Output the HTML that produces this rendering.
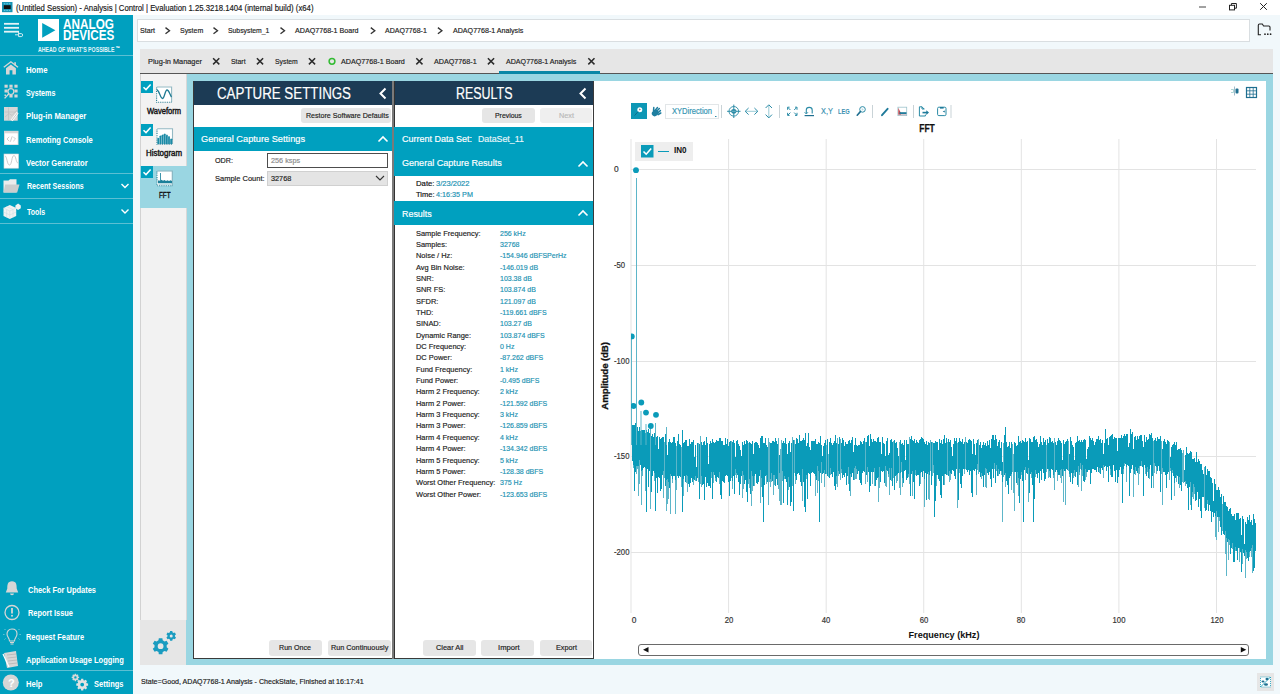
<!DOCTYPE html>
<html><head><meta charset="utf-8"><title>ACE</title>
<style>
html,body{margin:0;padding:0;width:1280px;height:694px;overflow:hidden;background:#fff}
body{position:relative;font-family:"Liberation Sans",sans-serif}
body>div{position:absolute;white-space:pre}
.r{-webkit-text-stroke:0.18px currentColor}
svg{overflow:visible}
</style></head><body>
<div style="left:0px;top:0px;width:1280px;height:15px;background:#ffffff;"></div>
<svg style="position:absolute;left:1.5px;top:2px" width="10.5" height="10.2" viewBox="0 0 10.5 10.2">
<rect x="0" y="0" width="10.5" height="10.2" fill="#1a93b3"/><rect x="1.8" y="3.2" width="6.9" height="3.8" fill="#111"/>
<g fill="#66d0e8"><rect x="1.8" y="1.3" width="1.6" height="1"/><rect x="4.3" y="1.3" width="1.6" height="1"/><rect x="6.8" y="1.3" width="1.6" height="1"/>
<rect x="1.8" y="7.9" width="1.6" height="1"/><rect x="4.3" y="7.9" width="1.6" height="1"/><rect x="6.8" y="7.9" width="1.6" height="1"/></g></svg>
<svg style="position:absolute;left:0;top:0" width="1280" height="15" viewBox="0 0 1280 15">
<line x1="1199" y1="7" x2="1206" y2="7" stroke="#444" stroke-width="1"/>
<rect x="1229.5" y="5.3" width="5" height="4.6" fill="none" stroke="#222" stroke-width="1"/>
<path d="M1231.4 5.2 V3.5 H1236.4 V8.2 H1234.6" fill="none" stroke="#222" stroke-width="1"/>
<path d="M1260.2 3.2 L1266.8 9.8 M1266.8 3.2 L1260.2 9.8" stroke="#222" stroke-width="1"/>
</svg>
<div style="left:0px;top:15px;width:133px;height:679px;background:#00a0bf;"></div>
<div style="left:133px;top:15px;width:1147px;height:679px;background:#f1f8fb;"></div>
<svg style="position:absolute;left:0px;top:16px" width="30" height="24" viewBox="0 16 30 24">
<g stroke="#e6f3f6" stroke-width="1.8"><line x1="4" y1="23.8" x2="19" y2="23.8"/><line x1="4" y1="27.8" x2="19" y2="27.8"/><line x1="4" y1="31.7" x2="19" y2="31.7"/></g>
<g stroke="#e6f3f6" stroke-width="0.9" fill="none"><path d="M15 34.8 H18.3 M18.6 31.8 V36.6 M18.6 33.6 H21.3 Q22.6 33.6 22.6 35.1 Q22.6 36.6 21.3 36.6 H18.6"/></g></svg>
<div style="left:38px;top:19px;width:21px;height:22px;background:#ffffff;"></div>
<svg style="position:absolute;left:38px;top:19px" width="21" height="22" viewBox="0 0 21 22"><path d="M4.2 4 L17.4 11.2 L4.2 18.8 Z" fill="#00a0bf"/></svg>
<div style="left:0px;top:55px;width:133px;height:1px;background:#5cbfd3;"></div>
<svg style="position:absolute;left:2px;top:60px" width="18" height="112" viewBox="0 0 18 112">
<path d="M1.8 7.2 L8.9 1.8 L16 7.2" stroke="#d6d6d6" stroke-width="1.4" fill="none"/>
<rect x="12.3" y="2.2" width="1.6" height="3.2" fill="#d6d6d6"/>
<path d="M4 8.2 L8.9 4.4 L13.9 8.2 V14.4 H10.4 V10.2 H7.6 V14.4 H4 Z" fill="#d6d6d6"/>
<g fill="#d6d6d6"><rect x="2.5" y="24.7" width="3.2" height="3"/><rect x="7.4" y="24.7" width="3.2" height="3"/><rect x="12.4" y="24.7" width="3.2" height="3"/>
<rect x="2.5" y="29.5" width="3.2" height="3"/><rect x="12.4" y="29.5" width="3.2" height="3"/>
<rect x="7.4" y="34.5" width="3.2" height="3"/><rect x="12.4" y="34.5" width="3.2" height="3"/><rect x="2.5" y="34.5" width="1.5" height="1.5"/></g>
<circle cx="8.9" cy="31.6" r="2.9" fill="#00a0bf" stroke="#d6d6d6" stroke-width="1.2"/>
<path d="M6.8 33.8 L2.6 38.4" stroke="#d6d6d6" stroke-width="1.4"/>
<rect x="2" y="47" width="13.7" height="13.7" fill="#d6d6d6"/>
<path d="M2.5 52 H15 M6.5 47.5 V60 M3 57 L7 53.5 L10 55.5 L15 50" stroke="#bdbdbd" stroke-width="0.6" fill="none"/>
<path d="M9.6 60.6 L15.6 52.6" stroke="#ffffff" stroke-width="2.4"/>
<path d="M9.6 60.6 L15.6 52.6" stroke="#c8c8c8" stroke-width="1"/>
<rect x="2" y="70.8" width="14.5" height="14.2" fill="#d6d6d6"/>
<rect x="2.8" y="73.3" width="12.9" height="11" fill="#ffffff"/>
<path d="M7.2 76.8 L5 79 L7.2 81.2 M11.3 76.8 L13.5 79 L11.3 81.2 M10.2 76.3 L8.3 81.8" stroke="#c0c0c0" stroke-width="0.8" fill="none"/>
<rect x="2" y="94" width="14.5" height="14.2" fill="#ffffff" stroke="#d6d6d6" stroke-width="0.6"/>
<path d="M3 96 C5 96, 5 105, 7.5 105 C10 105, 9.5 95.5, 12 95.5 C14 95.5, 14 103, 16 103" stroke="#c4c4c4" stroke-width="0.9" fill="none"/>
</svg>
<div style="left:0px;top:173px;width:133px;height:1px;background:#5cbfd3;"></div>
<svg style="position:absolute;left:2px;top:177px" width="18" height="44" viewBox="0 0 18 44">
<path d="M1.5 3.5 H6.5 L8 2.3 H14.5 V15.5 H1.5 Z" fill="#ececec"/>
<path d="M1.5 15.5 L3.2 7.6 H17.5 L15.2 15.5 Z" fill="#cdcdcd"/>
<path d="M1.5 31 L7.8 28 L14.2 31 V39 L7.8 42 L1.5 39 Z" fill="#f2f2f2"/>
<path d="M13.4 28.4 L16.1 26.5 L18.8 28.4 V31.2 L16.1 33 L13.4 31.2 Z" fill="#f2f2f2"/>
<g stroke="#c9dde2" stroke-width="0.5" fill="none"><path d="M1.5 31 L7.8 34 L14.2 31 M7.8 34 V42 M1.5 35 L7.8 38 L14.2 35 M4.6 29.5 L11 32.5 M4.6 32.5 V40.5 M11 32.5 V40.5"/></g>
</svg>
<svg style="position:absolute;left:119px;top:181px" width="12" height="36" viewBox="0 0 12 36">
<path d="M2.5 3 L6 6.5 L9.5 3 M2.5 28.5 L6 32 L9.5 28.5" stroke="#fff" stroke-width="1.4" fill="none"/></svg>
<div style="left:0px;top:198px;width:133px;height:1px;background:#5cbfd3;"></div>
<div style="left:0px;top:223px;width:133px;height:1px;background:#5cbfd3;"></div>
<svg style="position:absolute;left:2px;top:580px" width="20" height="112" viewBox="0 0 20 112">
<path d="M10 1.3 C5.5 1.3 5.3 5 5.3 8.5 L3.8 12.6 H16.2 L14.7 8.5 C14.7 5 14.5 1.3 10 1.3 Z M8 13.6 a2 1.6 0 0 0 4 0 Z" fill="#d6d6d6"/>
<circle cx="10" cy="32.5" r="7" fill="none" stroke="#d6d6d6" stroke-width="1.3"/>
<rect x="9.1" y="28" width="1.8" height="5.5" fill="#d6d6d6"/><circle cx="10" cy="35.8" r="1" fill="#d6d6d6"/>
<path d="M10 49 C6.5 49 5 51.5 5 54 C5 57 7.5 58 7.5 61 H12.5 C12.5 58 15 57 15 54 C15 51.5 13.5 49 10 49 Z" fill="none" stroke="#d6d6d6" stroke-width="1.1"/>
<path d="M8 62.5 H12 M8.5 64 H11.5" stroke="#d6d6d6" stroke-width="1"/><path d="M3.5 50 L2.5 49 M16.5 50 L17.5 49 M2.5 54.5 H1.2 M17.5 54.5 H18.8 M3.5 58.5 L2.5 59.5 M16.5 58.5 L17.5 59.5" stroke="#bfe3ea" stroke-width="0.6"/>
<path d="M2 73 L14 71 L16 86 L5 88 Z" fill="#d6d6d6"/>
<path d="M5 75 L14 74 M5.5 78 L14.5 77 M6 81 L15 80 M6.5 84 L15 83" stroke="#aaa" stroke-width="0.6"/>
<path d="M1 74 L7 87" stroke="#fff" stroke-width="1.2"/>
<circle cx="8.8" cy="102.5" r="8" fill="#d6d6d6"/>
</svg>
<div style="left:0px;top:670px;width:133px;height:1px;background:#5cbfd3;"></div>
<svg style="position:absolute;left:0;top:0" width="133" height="694" viewBox="0 0 133 694"><path d="M74.62 674.61 L74.73 673.66 L76.07 673.66 L76.18 674.61 L76.83 674.88 L77.57 674.28 L78.52 675.23 L77.92 675.97 L78.19 676.62 L79.14 676.73 L79.14 678.07 L78.19 678.18 L77.92 678.83 L78.52 679.57 L77.57 680.52 L76.83 679.92 L76.18 680.19 L76.07 681.14 L74.73 681.14 L74.62 680.19 L73.97 679.92 L73.23 680.52 L72.28 679.57 L72.88 678.83 L72.61 678.18 L71.66 678.07 L71.66 676.73 L72.61 676.62 L72.88 675.97 L72.28 675.23 L73.23 674.28 L73.97 674.88 Z M76.60 677.40 A1.2 1.2 0 1 0 74.20 677.40 A1.2 1.2 0 1 0 76.60 677.40 Z" fill="#d8d8d8" fill-rule="evenodd"/><path d="M80.97 680.17 L81.15 678.69 L83.25 678.69 L83.43 680.17 L84.46 680.60 L85.63 679.68 L87.12 681.17 L86.20 682.34 L86.63 683.37 L88.11 683.55 L88.11 685.65 L86.63 685.83 L86.20 686.86 L87.12 688.03 L85.63 689.52 L84.46 688.60 L83.43 689.03 L83.25 690.51 L81.15 690.51 L80.97 689.03 L79.94 688.60 L78.77 689.52 L77.28 688.03 L78.20 686.86 L77.77 685.83 L76.29 685.65 L76.29 683.55 L77.77 683.37 L78.20 682.34 L77.28 681.17 L78.77 679.68 L79.94 680.60 Z M84.10 684.60 A1.9 1.9 0 1 0 80.30 684.60 A1.9 1.9 0 1 0 84.10 684.60 Z" fill="#e2e2e2" fill-rule="evenodd"/></svg>
<div style="left:137px;top:18.5px;width:1113px;height:23px;background:#ffffff;box-sizing:border-box;border:1px solid #d9dee1"></div>
<svg style="position:absolute;left:0;top:0" width="600" height="45"><g stroke="#333" stroke-width="1.35" fill="none"><path d="M165.5 27.6 L169.5 30.7 L165.5 33.8" /><path d="M213.5 27.6 L217.5 30.7 L213.5 33.8" /><path d="M280.5 27.6 L284.5 30.7 L280.5 33.8" /><path d="M370.8 27.6 L374.8 30.7 L370.8 33.8" /><path d="M437.90000000000003 27.6 L441.90000000000003 30.7 L437.90000000000003 33.8" /></g></svg>
<svg style="position:absolute;left:0;top:0" width="1280" height="45" viewBox="0 0 1280 45">
<path d="M1261 34.8 H1258.3 V25.2 Q1258.3 24 1259.5 24 H1262.3 L1263.6 26 H1268.8 Q1270 26 1270 27.2 V30.5" fill="none" stroke="#222" stroke-width="1.1"/>
<g fill="#222"><circle cx="1265" cy="34.2" r="0.85"/><circle cx="1267.8" cy="34.2" r="0.85"/><circle cx="1270.6" cy="34.2" r="0.85"/></g></svg>
<div style="left:140px;top:49px;width:1133px;height:24px;background:#e6e6e6;"></div>
<div style="left:140px;top:72.5px;width:1133px;height:1px;background:#555555;"></div>
<svg style="position:absolute;left:0;top:0" width="620" height="75"><g stroke="#2b2b2b" stroke-width="1.5" fill="none"><path d="M213.1 58.2 L219.29999999999998 64.4 M219.29999999999998 58.2 L213.1 64.4"/><path d="M256.9 58.2 L263.1 64.4 M263.1 58.2 L256.9 64.4"/><path d="M308.9 58.2 L315.1 64.4 M315.1 58.2 L308.9 64.4"/><path d="M416.29999999999995 58.2 L422.5 64.4 M422.5 58.2 L416.29999999999995 64.4"/><path d="M487.9 58.2 L494.1 64.4 M494.1 58.2 L487.9 64.4"/><path d="M588.3 58.2 L594.5 64.4 M594.5 58.2 L588.3 64.4"/></g><circle cx="332" cy="61.3" r="2.9" fill="none" stroke="#33bb33" stroke-width="1.5"/></svg>
<div style="left:499px;top:71px;width:100.5px;height:2.5px;background:#0a87a6;"></div>
<div style="left:140px;top:73.5px;width:1133px;height:591.5px;background:#9ad6e2;"></div>
<div style="left:140px;top:74px;width:46.5px;height:546px;background:#f2f2f2;box-sizing:border-box;border-left:1px solid #d2d2d2;border-right:1px solid #d8d8d8"></div>
<div style="left:140px;top:620px;width:46px;height:44.5px;background:#e6e6e6;"></div>
<div style="left:140px;top:165.5px;width:53px;height:42px;background:#9ad6e2;"></div>
<svg style="position:absolute;left:141px;top:81px" width="12" height="12" viewBox="0 0 12 12"><rect width="12" height="12" fill="#00a0bf"/><path d="M2.5 6.2 L5 8.6 L9.6 3.4" stroke="#fff" stroke-width="1.5" fill="none"/></svg>
<svg style="position:absolute;left:141px;top:123.5px" width="12" height="12" viewBox="0 0 12 12"><rect width="12" height="12" fill="#00a0bf"/><path d="M2.5 6.2 L5 8.6 L9.6 3.4" stroke="#fff" stroke-width="1.5" fill="none"/></svg>
<svg style="position:absolute;left:141px;top:165.5px" width="12" height="12" viewBox="0 0 12 12"><rect width="12" height="12" fill="#00a0bf"/><path d="M2.5 6.2 L5 8.6 L9.6 3.4" stroke="#fff" stroke-width="1.5" fill="none"/></svg>
<svg style="position:absolute;left:155px;top:85px" width="20" height="110" viewBox="0 0 20 110">
<rect x="1.5" y="1.8" width="15.2" height="15.4" fill="#fff"/>
<path d="M1.8 2 H16.6 V17" stroke="#94b9c4" stroke-width="1.1" fill="none"/>
<path d="M1.6 2.5 V17.2 H16.6" stroke="#2b7d93" stroke-width="1.1" stroke-dasharray="0.9 0.9" fill="none"/>
<path d="M2 5 C4 5, 5.5 13.5, 7.5 13.5 C9.5 13.5, 10 5, 12 5 C14 5, 15 10, 16.5 12" stroke="#1f7a92" stroke-width="1.3" fill="none"/>
<rect x="2" y="43.6" width="15.6" height="15.5" fill="#fff"/>
<path d="M2.2 43.8 H17.5 V59" stroke="#94b9c4" stroke-width="1.1" fill="none"/>
<path d="M2 44.5 V59.2 H17.5" stroke="#2b7d93" stroke-width="1.1" stroke-dasharray="0.9 0.9" fill="none"/>
<g fill="#1b8aa6"><path d="M2.4 59 V53.5 Q3.3 51.9 4.2 53.5 V59 Z"/><path d="M4.5 59 V51.3 Q5.5 49.699999999999996 6.5 51.3 V59 Z"/><path d="M6.8 59 V50.2 Q7.699999999999999 48.6 8.6 50.2 V59 Z"/><path d="M8.9 59 V49.2 Q9.8 47.6 10.7 49.2 V59 Z"/><path d="M11 59 V50.2 Q11.9 48.6 12.8 50.2 V59 Z"/><path d="M13.1 59 V51.7 Q14.0 50.1 14.9 51.7 V59 Z"/><path d="M15.2 59 V54.2 Q16.2 52.6 17.2 54.2 V59 Z"/></g>
<rect x="2" y="85.8" width="15.5" height="14.9" fill="#fff"/>
<path d="M2.2 86 H17.3 V100.7" stroke="#7fb0bd" stroke-width="1.1" fill="none"/>
<path d="M2 86.6 V100.8 H17.3" stroke="#2b7d93" stroke-width="1.1" stroke-dasharray="0.9 0.9" fill="none"/>
<rect x="5.1" y="88" width="0.9" height="9" fill="#2a8aa3"/>
<path d="M3 96 L4 95 L5 96.2 L6.5 94.8 L8 95.8 L9.5 95 L11 96 L12.5 95.2 L14 96 L15.5 95.3 L17 96 V98.2 H3 Z" fill="#1b7f99"/>
<path d="M3.5 99.3 H16.5" stroke="#7fb7c6" stroke-width="0.6"/>
</svg>
<svg style="position:absolute;left:0;top:0" width="200" height="694" viewBox="0 0 200 694"><path d="M158.50 640.37 L158.81 638.20 L162.39 638.20 L162.70 640.37 L164.60 641.46 L166.64 640.65 L168.42 643.75 L166.70 645.10 L166.70 647.30 L168.42 648.65 L166.64 651.75 L164.60 650.94 L162.70 652.03 L162.39 654.20 L158.81 654.20 L158.50 652.03 L156.60 650.94 L154.56 651.75 L152.78 648.65 L154.50 647.30 L154.50 645.10 L152.78 643.75 L154.56 640.65 L156.60 641.46 Z M163.50 646.20 A2.9 2.9 0 1 0 157.70 646.20 A2.9 2.9 0 1 0 163.50 646.20 Z" fill="#1a9cc0" fill-rule="evenodd"/><path d="M169.91 632.32 L170.11 631.02 L172.29 631.02 L172.49 632.32 L173.65 633.00 L174.88 632.52 L175.97 634.40 L174.94 635.23 L174.94 636.57 L175.97 637.40 L174.88 639.28 L173.65 638.80 L172.49 639.48 L172.29 640.78 L170.11 640.78 L169.91 639.48 L168.75 638.80 L167.52 639.28 L166.43 637.40 L167.46 636.57 L167.46 635.23 L166.43 634.40 L167.52 632.52 L168.75 633.00 Z M172.70 635.90 A1.5 1.5 0 1 0 169.70 635.90 A1.5 1.5 0 1 0 172.70 635.90 Z" fill="#1a9cc0" fill-rule="evenodd"/></svg>
<div style="left:193px;top:81px;width:201px;height:578px;background:#ffffff;box-sizing:border-box;border:1px solid #3a3a3a"></div>
<div style="left:194px;top:81px;width:199px;height:23.5px;background:#1c3b55;"></div>
<svg style="position:absolute;left:376px;top:86px" width="14" height="16"><path d="M9.5 2.5 L4.5 7.5 L9.5 12.5" stroke="#fff" stroke-width="2" fill="none"/></svg>
<div style="left:301px;top:108px;width:90px;height:15px;background:#e6e6e6;border-radius:3px"></div>
<div style="left:194px;top:126.5px;width:199px;height:24px;background:#00a0bf;"></div>
<svg style="position:absolute;left:375px;top:132px" width="16" height="14"><path d="M3.5 9.5 L8 5 L12.5 9.5" stroke="#fff" stroke-width="1.6" fill="none"/></svg>
<div style="left:267px;top:153px;width:120.5px;height:15px;background:#ffffff;box-sizing:border-box;border:1.3px solid #4d4d4d"></div>
<div style="left:267px;top:171px;width:120.5px;height:14.7px;background:#e4e4e4;box-sizing:border-box;border:1px solid #d0d0d0"></div>
<svg style="position:absolute;left:374px;top:173px" width="12" height="10"><path d="M2 3 L6 7 L10 3" stroke="#333" stroke-width="1.1" fill="none"/></svg>
<div style="left:268.7px;top:640px;width:53.3px;height:15.5px;background:#e6e6e6;border-radius:3px"></div>
<div style="left:327.6px;top:640px;width:63px;height:15.5px;background:#e6e6e6;border-radius:3px"></div>
<div style="left:393px;top:81px;width:201px;height:578px;background:#ffffff;box-sizing:border-box;border:1px solid #3a3a3a"></div>
<div style="left:394px;top:81px;width:199px;height:23.5px;background:#1c3b55;"></div>
<div style="left:392px;top:81px;width:3px;height:578px;background:#7a7a7a;box-sizing:border-box;border-right:1px solid #333"></div>
<svg style="position:absolute;left:576px;top:86px" width="14" height="16"><path d="M9.5 2.5 L4.5 7.5 L9.5 12.5" stroke="#fff" stroke-width="2" fill="none"/></svg>
<div style="left:481.6px;top:108px;width:53.2px;height:15px;background:#e6e6e6;border-radius:3px"></div>
<div style="left:540px;top:108px;width:52px;height:15px;background:#efefef;border-radius:3px"></div>
<div style="left:394px;top:126.5px;width:199px;height:49px;background:#00a0bf;"></div>
<svg style="position:absolute;left:575px;top:157px" width="16" height="14"><path d="M3.5 9.5 L8 5 L12.5 9.5" stroke="#fff" stroke-width="1.6" fill="none"/></svg>
<div style="left:394px;top:201.2px;width:199px;height:23.5px;background:#00a0bf;"></div>
<svg style="position:absolute;left:575px;top:206px" width="16" height="14"><path d="M3.5 9.5 L8 5 L12.5 9.5" stroke="#fff" stroke-width="1.6" fill="none"/></svg>
<div style="left:423.2px;top:640px;width:52.5px;height:15.5px;background:#e6e6e6;border-radius:3px"></div>
<div style="left:481.3px;top:640px;width:52.9px;height:15.5px;background:#e6e6e6;border-radius:3px"></div>
<div style="left:539.8px;top:640px;width:52.2px;height:15.5px;background:#e6e6e6;border-radius:3px"></div>
<div style="left:594px;top:81px;width:672px;height:578px;background:#ffffff;"></div>
<svg style="position:absolute;left:0;top:0" width="1280" height="694" viewBox="0 0 1280 694"><path d="M631 169.5 H1256 M631 265.5 H1256 M631 361.5 H1256 M631 456.5 H1256 M631 552.5 H1256" stroke="#e3e3e3" stroke-width="1" fill="none" shape-rendering="crispEdges"/><path d="M631.00 139 V613 M728.58 139 V613 M826.16 139 V613 M923.74 139 V613 M1021.32 139 V613 M1118.90 139 V613 M1216.48 139 V613" stroke="#e3e3e3" stroke-width="1" fill="none"/><path d="M632.5 425 V461 M633.5 425 V465 M634.5 425 V491 M635.5 423 V472 M636.5 423 V466 M637.5 427 V466 M638.5 431 V466 M639.5 427 V460 M640.5 431 V465 M641.5 430 V471 M642.5 430 V470 M643.5 430 V468 M644.5 430 V467 M645.5 433 V468 M646.5 430 V512 M647.5 432 V469 M648.5 429 V487 M649.5 433 V471 M651.5 436 V492 M652.5 434 V476 M653.5 437 V471 M654.5 433 V473 M655.5 432 V511 M656.5 437 V478 M657.5 436 V493 M658.5 449 V477 M659.5 437 V478 M660.5 439 V491 M661.5 438 V489 M662.5 437 V475 M663.5 437 V471 M665.5 434 V486 M666.5 441 V480 M667.5 455 V479 M668.5 442 V482 M669.5 439 V488 M670.5 442 V474 M671.5 443 V476 M672.5 442 V479 M673.5 437 V476 M674.5 437 V476 M675.5 443 V480 M677.5 441 V476 M678.5 434 V478 M679.5 444 V476 M680.5 445 V477 M682.5 430 V512 M683.5 443 V479 M684.5 442 V476 M685.5 440 V482 M686.5 440 V475 M687.5 446 V476 M688.5 446 V484 M689.5 439 V487 M690.5 444 V483 M691.5 442 V478 M692.5 442 V482 M693.5 440 V479 M694.5 457 V480 M695.5 445 V476 M696.5 467 V481 M697.5 443 V478 M699.5 444 V499 M701.5 442 V476 M702.5 445 V485 M703.5 442 V484 M704.5 441 V500 M705.5 445 V477 M706.5 437 V487 M707.5 443 V483 M708.5 464 V486 M709.5 444 V486 M710.5 441 V488 M711.5 443 V472 M712.5 439 V499 M713.5 442 V472 M714.5 443 V475 M715.5 442 V478 M716.5 440 V482 M717.5 441 V477 M718.5 441 V478 M719.5 438 V472 M720.5 438 V495 M721.5 441 V499 M722.5 441 V481 M723.5 445 V482 M724.5 445 V483 M725.5 438 V476 M726.5 444 V475 M727.5 439 V476 M728.5 446 V482 M729.5 442 V496 M730.5 441 V481 M732.5 442 V481 M733.5 440 V476 M734.5 443 V494 M735.5 457 V469 M736.5 441 V473 M737.5 440 V475 M738.5 444 V482 M739.5 446 V495 M740.5 450 V484 M741.5 456 V476 M742.5 442 V471 M743.5 445 V475 M744.5 441 V484 M745.5 444 V480 M746.5 440 V492 M747.5 441 V502 M749.5 442 V479 M750.5 443 V494 M751.5 444 V471 M752.5 441 V476 M753.5 454 V486 M754.5 443 V476 M755.5 442 V474 M756.5 442 V483 M757.5 443 V484 M758.5 445 V482 M759.5 448 V476 M760.5 438 V470 M761.5 436 V478 M762.5 436 V497 M763.5 443 V522 M764.5 443 V485 M765.5 438 V476 M766.5 445 V475 M767.5 447 V482 M770.5 443 V479 M771.5 443 V473 M772.5 441 V481 M773.5 441 V475 M774.5 442 V475 M775.5 438 V486 M776.5 441 V479 M777.5 444 V485 M779.5 455 V473 M782.5 443 V471 M783.5 441 V503 M784.5 443 V476 M785.5 438 V479 M786.5 444 V482 M787.5 454 V505 M788.5 443 V477 M789.5 441 V487 M790.5 452 V506 M791.5 443 V502 M793.5 440 V511 M795.5 444 V476 M796.5 438 V480 M797.5 439 V474 M798.5 443 V473 M799.5 435 V475 M800.5 441 V482 M801.5 441 V486 M802.5 440 V469 M803.5 438 V482 M804.5 440 V507 M805.5 433 V512 M806.5 446 V475 M807.5 443 V499 M808.5 433 V473 M809.5 447 V474 M810.5 450 V486 M811.5 441 V473 M812.5 441 V472 M813.5 441 V473 M814.5 441 V474 M815.5 439 V476 M816.5 444 V480 M817.5 444 V466 M818.5 442 V471 M819.5 443 V522 M820.5 436 V473 M821.5 445 V462 M822.5 456 V474 M823.5 446 V473 M824.5 443 V470 M825.5 440 V474 M827.5 439 V476 M829.5 442 V478 M830.5 438 V468 M831.5 443 V474 M832.5 445 V477 M833.5 443 V472 M834.5 441 V486 M835.5 435 V490 M836.5 443 V476 M838.5 444 V471 M839.5 437 V474 M841.5 443 V469 M842.5 438 V478 M843.5 440 V475 M844.5 446 V477 M845.5 442 V473 M846.5 444 V485 M847.5 444 V476 M848.5 441 V467 M849.5 440 V491 M850.5 443 V474 M851.5 440 V477 M852.5 437 V473 M853.5 452 V480 M854.5 445 V468 M855.5 438 V466 M856.5 445 V469 M857.5 446 V474 M858.5 445 V471 M859.5 445 V480 M860.5 441 V483 M861.5 442 V485 M862.5 444 V473 M863.5 441 V471 M864.5 438 V472 M866.5 442 V475 M867.5 436 V467 M868.5 435 V472 M869.5 446 V492 M870.5 434 V486 M871.5 439 V472 M872.5 442 V472 M873.5 439 V472 M874.5 441 V468 M875.5 441 V486 M876.5 442 V480 M877.5 438 V478 M878.5 437 V477 M879.5 442 V467 M880.5 442 V482 M881.5 454 V471 M882.5 437 V472 M883.5 443 V471 M884.5 444 V483 M885.5 456 V466 M886.5 441 V470 M887.5 438 V471 M888.5 455 V474 M889.5 453 V468 M890.5 440 V480 M891.5 439 V468 M892.5 442 V486 M894.5 440 V490 M895.5 443 V476 M896.5 442 V475 M897.5 448 V474 M898.5 456 V473 M900.5 440 V473 M901.5 444 V462 M902.5 443 V478 M903.5 445 V483 M904.5 440 V471 M905.5 460 V470 M906.5 440 V480 M907.5 444 V478 M908.5 444 V474 M910.5 439 V496 M911.5 436 V474 M912.5 440 V471 M913.5 441 V482 M914.5 439 V499 M915.5 443 V470 M916.5 440 V476 M917.5 442 V475 M918.5 443 V475 M919.5 440 V486 M920.5 439 V473 M921.5 437 V472 M922.5 438 V477 M923.5 439 V471 M924.5 442 V479 M925.5 444 V473 M926.5 441 V500 M927.5 445 V474 M928.5 442 V472 M929.5 443 V475 M931.5 442 V485 M933.5 443 V465 M934.5 443 V517 M935.5 441 V501 M936.5 442 V475 M937.5 442 V475 M938.5 450 V479 M939.5 439 V481 M940.5 443 V495 M941.5 440 V498 M942.5 444 V476 M943.5 439 V485 M944.5 435 V474 M945.5 443 V474 M946.5 438 V475 M948.5 439 V476 M949.5 442 V471 M950.5 440 V473 M951.5 447 V474 M952.5 456 V470 M953.5 444 V471 M954.5 438 V476 M955.5 441 V479 M956.5 438 V469 M958.5 442 V500 M959.5 438 V469 M960.5 441 V484 M961.5 442 V488 M962.5 439 V476 M963.5 444 V469 M964.5 442 V469 M966.5 442 V470 M967.5 443 V472 M968.5 440 V470 M969.5 439 V475 M970.5 440 V471 M971.5 441 V493 M972.5 454 V497 M973.5 439 V470 M974.5 444 V471 M975.5 455 V469 M976.5 443 V475 M977.5 440 V464 M979.5 445 V472 M980.5 442 V477 M981.5 448 V473 M982.5 445 V476 M983.5 442 V487 M984.5 445 V475 M985.5 443 V468 M986.5 446 V469 M987.5 441 V473 M988.5 445 V475 M989.5 440 V472 M990.5 448 V479 M991.5 439 V487 M992.5 435 V469 M993.5 435 V478 M994.5 440 V463 M995.5 435 V483 M996.5 439 V465 M997.5 446 V476 M998.5 442 V469 M999.5 440 V474 M1000.5 448 V471 M1001.5 442 V471 M1002.5 462 V482 M1004.5 435 V475 M1005.5 427 V473 M1006.5 442 V481 M1007.5 447 V485 M1008.5 446 V494 M1009.5 442 V478 M1010.5 448 V476 M1011.5 442 V474 M1014.5 442 V472 M1015.5 443 V472 M1016.5 446 V483 M1017.5 445 V472 M1018.5 436 V478 M1019.5 442 V503 M1020.5 441 V479 M1021.5 443 V472 M1022.5 440 V481 M1023.5 441 V522 M1024.5 442 V470 M1025.5 438 V467 M1026.5 442 V473 M1027.5 441 V474 M1028.5 460 V468 M1029.5 438 V493 M1030.5 439 V474 M1031.5 442 V472 M1032.5 442 V485 M1033.5 437 V522 M1034.5 436 V499 M1035.5 440 V470 M1036.5 439 V474 M1037.5 442 V478 M1038.5 447 V473 M1039.5 444 V483 M1040.5 436 V471 M1041.5 442 V480 M1042.5 445 V469 M1043.5 438 V473 M1044.5 442 V481 M1045.5 440 V479 M1047.5 439 V469 M1048.5 443 V469 M1049.5 437 V471 M1050.5 438 V478 M1051.5 442 V469 M1052.5 441 V470 M1053.5 443 V475 M1055.5 442 V472 M1056.5 445 V470 M1057.5 441 V472 M1058.5 438 V475 M1059.5 440 V475 M1060.5 441 V470 M1061.5 443 V469 M1062.5 460 V476 M1063.5 440 V469 M1064.5 444 V471 M1065.5 442 V471 M1066.5 441 V469 M1067.5 439 V470 M1069.5 454 V474 M1070.5 437 V482 M1071.5 441 V473 M1072.5 445 V484 M1073.5 447 V473 M1074.5 460 V470 M1075.5 443 V477 M1076.5 442 V472 M1077.5 436 V485 M1078.5 441 V466 M1079.5 440 V472 M1080.5 442 V463 M1081.5 440 V470 M1082.5 442 V465 M1083.5 440 V481 M1084.5 439 V482 M1085.5 440 V469 M1086.5 459 V472 M1087.5 449 V472 M1088.5 447 V470 M1089.5 436 V470 M1090.5 438 V484 M1091.5 440 V473 M1092.5 438 V469 M1093.5 441 V469 M1094.5 445 V470 M1095.5 442 V470 M1096.5 439 V472 M1097.5 439 V467 M1098.5 436 V472 M1099.5 440 V468 M1100.5 439 V474 M1101.5 443 V468 M1102.5 440 V470 M1103.5 454 V465 M1104.5 443 V467 M1105.5 429 V466 M1106.5 439 V471 M1107.5 438 V467 M1108.5 445 V482 M1109.5 437 V466 M1110.5 436 V469 M1111.5 435 V477 M1112.5 434 V477 M1113.5 439 V465 M1114.5 437 V471 M1115.5 438 V482 M1116.5 438 V470 M1117.5 451 V483 M1118.5 438 V477 M1119.5 438 V470 M1120.5 438 V467 M1121.5 435 V474 M1122.5 438 V503 M1123.5 436 V469 M1124.5 434 V463 M1125.5 436 V464 M1126.5 434 V467 M1127.5 434 V465 M1128.5 447 V466 M1129.5 443 V496 M1130.5 429 V473 M1131.5 434 V469 M1132.5 432 V465 M1133.5 449 V470 M1134.5 437 V474 M1135.5 436 V467 M1136.5 440 V471 M1137.5 436 V473 M1138.5 439 V468 M1139.5 436 V466 M1140.5 435 V466 M1141.5 435 V461 M1142.5 441 V467 M1143.5 447 V496 M1144.5 435 V465 M1145.5 442 V468 M1146.5 437 V476 M1147.5 440 V467 M1148.5 439 V478 M1149.5 434 V469 M1150.5 435 V465 M1151.5 433 V488 M1152.5 438 V476 M1154.5 440 V463 M1155.5 438 V466 M1156.5 441 V467 M1157.5 437 V471 M1158.5 439 V466 M1159.5 439 V471 M1160.5 436 V492 M1162.5 449 V468 M1163.5 441 V472 M1164.5 439 V472 M1165.5 442 V475 M1166.5 444 V488 M1167.5 440 V474 M1168.5 441 V472 M1170.5 457 V468 M1171.5 447 V500 M1172.5 445 V470 M1173.5 444 V476 M1174.5 442 V483 M1175.5 445 V478 M1176.5 442 V475 M1177.5 450 V476 M1178.5 449 V484 M1179.5 449 V477 M1180.5 448 V485 M1181.5 450 V491 M1184.5 470 V482 M1185.5 455 V481 M1186.5 447 V484 M1187.5 453 V488 M1188.5 454 V510 M1189.5 453 V487 M1190.5 451 V482 M1191.5 452 V510 M1192.5 459 V492 M1193.5 459 V484 M1194.5 458 V487 M1195.5 462 V501 M1196.5 452 V500 M1197.5 462 V492 M1198.5 459 V507 M1199.5 461 V499 M1200.5 464 V511 M1201.5 464 V518 M1202.5 470 V497 M1203.5 474 V497 M1205.5 466 V511 M1206.5 475 V510 M1207.5 469 V500 M1208.5 471 V511 M1209.5 471 V505 M1210.5 477 V511 M1211.5 478 V522 M1212.5 483 V512 M1213.5 501 V517 M1214.5 479 V513 M1215.5 484 V516 M1216.5 490 V511 M1217.5 490 V517 M1218.5 487 V517 M1219.5 490 V517 M1220.5 497 V527 M1221.5 494 V535 M1223.5 496 V534 M1224.5 502 V535 M1225.5 502 V531 M1226.5 506 V538 M1227.5 507 V542 M1228.5 511 V539 M1229.5 509 V540 M1230.5 508 V554 M1231.5 514 V548 M1232.5 516 V543 M1233.5 516 V562 M1234.5 514 V562 M1235.5 520 V547 M1236.5 513 V551 M1237.5 513 V560 M1238.5 513 V548 M1239.5 519 V548 M1240.5 518 V552 M1241.5 535 V572 M1242.5 516 V549 M1243.5 519 V553 M1244.5 544 V556 M1245.5 522 V550 M1246.5 524 V552 M1247.5 517 V558 M1248.5 520 V561 M1249.5 515 V552 M1250.5 522 V551 M1251.5 520 V548 M1252.5 525 V545 M1253.5 514 V571 M1254.5 519 V568 M1255.5 523 V551" stroke="#0a9bb9" stroke-width="1" fill="none" shape-rendering="crispEdges"/><path d="M633.5 465 V468 M636.5 466 V474 M637.5 466 V469 M638.5 466 V496 M639.5 460 V484 M641.5 471 V505 M642.5 470 V476 M645.5 468 V491 M650.5 428 V509 M654.5 473 V481 M663.5 471 V498 M664.5 442 V478 M666.5 480 V511 M667.5 479 V504 M668.5 482 V499 M670.5 474 V514 M672.5 479 V483 M675.5 480 V514 M676.5 446 V490 M681.5 447 V487 M683.5 479 V496 M686.5 475 V483 M687.5 476 V492 M693.5 479 V485 M695.5 476 V481 M698.5 443 V482 M700.5 436 V484 M701.5 476 V487 M711.5 472 V478 M713.5 472 V483 M715.5 478 V481 M719.5 472 V484 M731.5 441 V478 M732.5 481 V489 M735.5 469 V475 M736.5 473 V478 M742.5 471 V498 M743.5 475 V489 M748.5 443 V484 M749.5 479 V488 M751.5 471 V506 M752.5 476 V491 M754.5 476 V486 M760.5 470 V503 M761.5 478 V487 M766.5 475 V484 M768.5 438 V505 M769.5 442 V482 M770.5 479 V487 M771.5 473 V482 M773.5 475 V495 M774.5 475 V485 M778.5 438 V489 M779.5 473 V501 M780.5 449 V505 M781.5 440 V505 M782.5 471 V481 M784.5 476 V479 M788.5 477 V490 M792.5 437 V486 M794.5 440 V473 M795.5 476 V484 M802.5 469 V501 M806.5 475 V479 M815.5 476 V496 M817.5 466 V493 M818.5 471 V481 M821.5 462 V483 M824.5 470 V487 M826.5 445 V474 M828.5 454 V477 M830.5 468 V475 M836.5 476 V484 M837.5 438 V487 M838.5 471 V476 M840.5 439 V480 M841.5 469 V473 M848.5 467 V484 M850.5 474 V496 M854.5 468 V480 M855.5 466 V479 M856.5 469 V479 M865.5 442 V484 M867.5 467 V482 M872.5 472 V484 M874.5 468 V486 M878.5 477 V502 M879.5 467 V488 M885.5 466 V486 M886.5 470 V487 M888.5 474 V477 M889.5 468 V495 M891.5 468 V481 M893.5 441 V478 M896.5 475 V483 M897.5 474 V481 M899.5 442 V488 M900.5 473 V495 M901.5 462 V472 M902.5 478 V487 M908.5 474 V477 M909.5 437 V484 M912.5 471 V496 M915.5 470 V475 M920.5 473 V484 M924.5 479 V507 M928.5 472 V499 M929.5 475 V500 M930.5 440 V471 M932.5 442 V476 M933.5 465 V473 M936.5 475 V486 M944.5 474 V485 M947.5 442 V475 M949.5 471 V482 M950.5 473 V480 M957.5 443 V508 M959.5 469 V473 M964.5 469 V474 M965.5 437 V469 M976.5 475 V495 M977.5 464 V470 M978.5 439 V474 M981.5 473 V479 M985.5 468 V487 M986.5 469 V488 M994.5 463 V469 M996.5 465 V471 M998.5 469 V476 M1001.5 471 V475 M1002.5 482 V522 M1003.5 443 V477 M1005.5 473 V487 M1011.5 474 V490 M1012.5 444 V472 M1013.5 454 V493 M1014.5 472 V511 M1017.5 472 V485 M1018.5 478 V496 M1021.5 472 V475 M1025.5 467 V480 M1028.5 468 V502 M1031.5 472 V478 M1035.5 470 V477 M1046.5 445 V472 M1048.5 469 V478 M1049.5 471 V477 M1053.5 475 V478 M1054.5 438 V490 M1057.5 472 V481 M1060.5 470 V478 M1061.5 469 V483 M1063.5 469 V502 M1065.5 471 V505 M1068.5 441 V471 M1069.5 474 V477 M1073.5 473 V478 M1074.5 470 V476 M1078.5 466 V487 M1079.5 472 V475 M1080.5 463 V469 M1081.5 470 V491 M1082.5 465 V476 M1085.5 469 V480 M1086.5 472 V477 M1099.5 468 V473 M1103.5 465 V478 M1110.5 469 V475 M1123.5 469 V474 M1124.5 463 V466 M1126.5 467 V482 M1133.5 470 V497 M1135.5 467 V475 M1138.5 468 V485 M1139.5 466 V474 M1141.5 461 V466 M1145.5 468 V474 M1147.5 467 V472 M1149.5 469 V479 M1153.5 441 V488 M1154.5 463 V473 M1156.5 467 V474 M1161.5 441 V474 M1162.5 468 V505 M1169.5 442 V480 M1170.5 468 V471 M1172.5 470 V473 M1174.5 483 V496 M1176.5 475 V482 M1179.5 477 V488 M1182.5 453 V482 M1183.5 450 V483 M1185.5 481 V486 M1190.5 482 V505 M1192.5 492 V497 M1193.5 484 V499 M1194.5 487 V494 M1204.5 467 V508 M1207.5 500 V504 M1215.5 516 V537 M1216.5 511 V540 M1218.5 517 V532 M1219.5 517 V521 M1222.5 504 V531 M1225.5 531 V554 M1226.5 538 V576 M1228.5 539 V560 M1229.5 540 V545 M1232.5 543 V549 M1235.5 547 V551 M1239.5 548 V562 M1242.5 549 V564 M1245.5 550 V578 M1246.5 552 V559 M1249.5 552 V557 M1251.5 548 V557 M1252.5 545 V573" stroke="#5db6c9" stroke-width="1" fill="none" shape-rendering="crispEdges"/><path d="M631.5 336 V445 M636.5 178 V445 M641 411 V445 M646 424 V445 M655.5 423 V445 M666.5 427 V445" stroke="#5db6c9" stroke-width="1" fill="none"/><clipPath id="pc"><rect x="631" y="139" width="625" height="474"/></clipPath><g clip-path="url(#pc)"><circle cx="631.8" cy="336.4" r="2.9" fill="#0a9bb9"/><circle cx="636" cy="170.2" r="2.9" fill="#0a9bb9"/><circle cx="633.5" cy="406" r="2.9" fill="#0a9bb9"/><circle cx="641.3" cy="402.5" r="2.9" fill="#0a9bb9"/><circle cx="646" cy="412.6" r="2.9" fill="#0a9bb9"/><circle cx="650.8" cy="426" r="2.9" fill="#0a9bb9"/><circle cx="656" cy="414.8" r="2.9" fill="#0a9bb9"/></g></svg>
<div style="left:634.6px;top:142px;width:58.2px;height:19px;background:#eeeeee;"></div>
<svg style="position:absolute;left:641px;top:145px" width="13" height="13" viewBox="0 0 13 13"><rect width="12.5" height="12.5" fill="#0a9bb9"/><path d="M2.5 6.5 L5.2 9.2 L10.2 3.5" stroke="#fff" stroke-width="1.6" fill="none"/></svg>
<div style="left:657.6px;top:150.5px;width:11.3px;height:1.3px;background:#0a9bb9;"></div>
<div style="left:571.0px;top:370.9px;width:68px;height:10px;transform:rotate(-90deg);transform-origin:34px 5px;text-align:center;font-size:9.8px;line-height:10px;font-weight:700;color:#111;letter-spacing:-0.2px;-webkit-text-stroke:0.3px #111">Amplitude (dB)</div>
<div style="left:638.2px;top:644.3px;width:611.3px;height:11.4px;background:#ffffff;box-sizing:border-box;border:1.5px solid #6a6a6a;border-radius:3px"></div>
<svg style="position:absolute;left:638px;top:644px" width="612" height="12"><path d="M5 5.7 L10.5 3 V8.4 Z M608.3 5.7 L602.8 3 V8.4 Z" fill="#111"/></svg>
<svg style="position:absolute;left:1229px;top:85px" width="30" height="14" viewBox="0 0 30 14">
<path d="M2 4.5 H4.5 V7.5 H2" stroke="#9cc" stroke-width="0.8" fill="none"/>
<line x1="5.5" y1="1.5" x2="5.5" y2="10.5" stroke="#8ab" stroke-width="0.8"/>
<rect x="6.5" y="3.5" width="3" height="5" rx="1" fill="#1f6f90"/>
<rect x="17.5" y="2.5" width="10" height="10" fill="#fff" stroke="#1f6f90" stroke-width="1.2"/>
<path d="M17.5 5.8 H27.5 M17.5 9.2 H27.5 M20.8 2.5 V12.5 M24.2 2.5 V12.5" stroke="#1f6f90" stroke-width="0.8"/>
</svg>
<div style="left:630.6px;top:103px;width:16.3px;height:16.4px;background:#0d97b5;"></div>
<svg style="position:absolute;left:600px;top:95px" width="360" height="30" viewBox="600 95 360 30">
<circle cx="639.8" cy="109.7" r="2.5" fill="#fff"/><path d="M639.2 108.6 L640.8 109.4 L639.4 110.6 Z" fill="#555"/>
<path d="M638.2 111.5 L634.6 115.5" stroke="#0b6a88" stroke-width="0.9"/>
<g fill="#1f7ea0"><ellipse cx="655.2" cy="113" rx="3.6" ry="3" transform="rotate(-40 655.2 113)"/></g>
<g stroke="#1f7ea0" stroke-width="1.5" stroke-linecap="round"><path d="M653.5 110.5 L653.8 107.6 M654.8 110.8 L657.5 107.6 M656.5 111.6 L659.3 108.6 M657.6 113 L660.4 110.6 M658.2 114.6 L660.8 113"/></g>
<rect x="665.5" y="104.5" width="53" height="14" fill="#fff" stroke="#e2e6e8" stroke-width="1"/>
<path d="M715 116.5 H716.5" stroke="#2b8ba6" stroke-width="1"/>
<g stroke="#c9d3d7" stroke-width="1"><path d="M721.5 105 V118 M779.5 105 V118 M872.5 105 V118 M913.5 105 V118 M951 105 V118"/></g>
<g stroke="#0a9bb9" stroke-width="0.9" fill="none">
<circle cx="733.8" cy="111.3" r="4.8" stroke="#2b8ba6"/>
<path d="M733.8 104.6 V118 M727.1 111.3 H740.5" stroke="#2b8ba6" stroke-width="1"/>
</g>
<ellipse cx="733.8" cy="111.3" rx="2.6" ry="2.4" fill="#2b8ba6"/><path d="M731.8 111.3 H735.8" stroke="#8cc6d4" stroke-width="0.7"/>
<g fill="none">
<path d="M745.5 111.3 H757.5" stroke="#7dbccb" stroke-width="0.8"/>
<path d="M748.6 108 L745.2 111.3 L748.6 114.6 M754.4 108 L757.8 111.3 L754.4 114.6" stroke="#2b8ba6" stroke-width="1"/>
<path d="M768.8 105.5 V117.5" stroke="#7dbccb" stroke-width="0.8"/>
<path d="M765.6 108 L768.8 104.8 L772 108 M765.6 114.6 L768.8 117.9 L772 114.6" stroke="#2b8ba6" stroke-width="1"/>
</g>
<g stroke="#2b8ba6" stroke-width="1" fill="none">
<path d="M787.6 109.8 V107.2 H789.6 M787.9 107.5 L790.4 110 M797 109.8 V107.2 H795 M796.7 107.5 L794.2 110 M787.6 112.8 V115.4 H789.6 M787.9 115.1 L790.4 112.6 M797 112.8 V115.4 H795 M796.7 115.1 L794.2 112.6"/>
<path d="M806.3 113.5 V110 Q806.3 107.4 809.2 107.4 Q812.2 107.4 812.2 110 V113.5" stroke="#2b8ba6" stroke-width="1.1"/><path d="M804.6 112.2 L806.3 114 L808 112.2" stroke="#2b8ba6" stroke-width="0.9"/><path d="M804.6 115.6 H814" stroke="#1f6f90" stroke-width="1.2"/>
<circle cx="862.5" cy="109.4" r="2.8" stroke="#2b8ba6" stroke-width="1"/><path d="M862 108.3 L863.2 109.8 H861.6" stroke="#6fb5c7" stroke-width="0.5"/><path d="M860.4 111.6 L857.2 115.2" stroke="#1f6f90" stroke-width="1.6" stroke-linecap="round"/>
</g>
<path d="M882 115.2 L887.6 108.8" stroke="#1f7a9a" stroke-width="1.9" stroke-linecap="round"/>
<rect x="897.9" y="107.2" width="8.8" height="8.4" fill="#fff" stroke="#9dc3cc" stroke-width="0.8"/>
<path d="M898.3 114.8 V107.8 L899.6 110.5 L901 113 V114.8 Z" fill="#c8474f"/>
<rect x="899.5" y="112.2" width="7" height="2" fill="#1f7a9a"/>
<path d="M898.3 114.8 H906.4" stroke="#d9a0a4" stroke-width="0.6"/>
<g stroke="#2b8ba6" stroke-width="1" fill="none">
<path d="M924 109 L922 106.8 H919.4 V116 H925.4 V114.6"/><path d="M922 106.8 V109 H924.5"/>
</g>
<path d="M922.5 112.6 H927" stroke="#1f7a9a" stroke-width="1.6"/><path d="M926.3 110.3 L929 112.6 L926.3 114.9 Z" fill="#1f7a9a"/>
<rect x="937.6" y="107.2" width="8.4" height="8.4" rx="1.2" fill="#fff" stroke="#2b8ba6" stroke-width="1"/>
<rect x="940" y="107" width="3.6" height="1.6" fill="#1f7a9a"/>
<path d="M944.8 110.4 L942.6 111.5 L944.8 112.6 Z" fill="#1f7a9a"/>
</svg>
<div style="left:1257px;top:673px;width:17px;height:18px;background:#e6e6e6;"></div>
<svg style="position:absolute;left:1257px;top:673px" width="17" height="18" viewBox="0 0 17 18"><rect x="3.5" y="4" width="10" height="10" fill="#fff" stroke="#0a9bb9" stroke-width="0.8" stroke-dasharray="1 1"/><path d="M3.5 14 L13.5 4" stroke="#0a9bb9" stroke-width="0.8"/><ellipse cx="10" cy="6" rx="1.5" ry="1.2" fill="#1f6f90"/><ellipse cx="6" cy="8.5" rx="1.5" ry="1" fill="#1f6f90"/><ellipse cx="9" cy="11.5" rx="2" ry="1.2" fill="#1f6f90"/></svg>
<div class="r" style="left:15.50px;top:4.24px;font-size:8.8px;line-height:8.8px;font-weight:400;color:#1a1a1a;transform:scaleX(0.8813);transform-origin:0 50%;">(Untitled Session) - Analysis | Control | Evaluation 1.25.3218.1404 (internal build) (x64)</div>
<div style="left:63.20px;top:17.89px;font-size:13.8px;line-height:13.8px;font-weight:700;color:#ffffff;transform:scaleX(0.8529);transform-origin:0 50%;">ANALOG</div>
<div style="left:63.20px;top:29.39px;font-size:13.8px;line-height:13.8px;font-weight:700;color:#ffffff;transform:scaleX(0.8452);transform-origin:0 50%;">DEVICES</div>
<div style="left:38.00px;top:46.66px;font-size:6.3px;line-height:6.3px;font-weight:700;color:#e6f4f8;transform:scaleX(0.8284);transform-origin:0 50%;">AHEAD OF WHAT'S POSSIBLE</div>
<div class="r" style="left:115.50px;top:45.70px;font-size:4px;line-height:4px;font-weight:400;color:#e6f4f8;">™</div>
<div style="left:25.60px;top:65.82px;font-size:8.4px;line-height:8.4px;font-weight:700;color:#ffffff;transform:scaleX(0.9278);transform-origin:0 50%;">Home</div>
<div style="left:25.60px;top:89.12px;font-size:8.4px;line-height:8.4px;font-weight:700;color:#ffffff;transform:scaleX(0.8533);transform-origin:0 50%;">Systems</div>
<div style="left:25.60px;top:112.42px;font-size:8.4px;line-height:8.4px;font-weight:700;color:#ffffff;transform:scaleX(0.9255);transform-origin:0 50%;">Plug-in Manager</div>
<div style="left:25.60px;top:135.82px;font-size:8.4px;line-height:8.4px;font-weight:700;color:#ffffff;transform:scaleX(0.9029);transform-origin:0 50%;">Remoting Console</div>
<div style="left:25.60px;top:159.22px;font-size:8.4px;line-height:8.4px;font-weight:700;color:#ffffff;transform:scaleX(0.9063);transform-origin:0 50%;">Vector Generator</div>
<div style="left:26.80px;top:182.02px;font-size:8.4px;line-height:8.4px;font-weight:700;color:#ffffff;transform:scaleX(0.8459);transform-origin:0 50%;">Recent Sessions</div>
<div style="left:26.80px;top:207.72px;font-size:8.4px;line-height:8.4px;font-weight:700;color:#ffffff;transform:scaleX(0.8380);transform-origin:0 50%;">Tools</div>
<div style="left:7.90px;top:677.65px;font-size:11px;line-height:11px;font-weight:700;color:#ffffff;">?</div>
<div style="left:27.60px;top:586.22px;font-size:8.4px;line-height:8.4px;font-weight:700;color:#ffffff;transform:scaleX(0.8909);transform-origin:0 50%;">Check For Updates</div>
<div style="left:27.60px;top:609.22px;font-size:8.4px;line-height:8.4px;font-weight:700;color:#ffffff;transform:scaleX(0.8870);transform-origin:0 50%;">Report Issue</div>
<div style="left:25.70px;top:632.52px;font-size:8.4px;line-height:8.4px;font-weight:700;color:#ffffff;transform:scaleX(0.8838);transform-origin:0 50%;">Request Feature</div>
<div style="left:25.70px;top:656.22px;font-size:8.4px;line-height:8.4px;font-weight:700;color:#ffffff;transform:scaleX(0.9020);transform-origin:0 50%;">Application Usage Logging</div>
<div style="left:25.70px;top:679.72px;font-size:8.4px;line-height:8.4px;font-weight:700;color:#ffffff;transform:scaleX(0.9088);transform-origin:0 50%;">Help</div>
<div style="left:94.00px;top:679.72px;font-size:8.4px;line-height:8.4px;font-weight:700;color:#ffffff;transform:scaleX(0.8927);transform-origin:0 50%;">Settings</div>
<div class="r" style="left:140.20px;top:27.00px;font-size:8.0px;line-height:8.0px;font-weight:400;color:#222;transform:scaleX(0.8872);transform-origin:0 50%;">Start</div>
<div class="r" style="left:180.00px;top:27.00px;font-size:8.0px;line-height:8.0px;font-weight:400;color:#222;transform:scaleX(0.8698);transform-origin:0 50%;">System</div>
<div class="r" style="left:228.00px;top:27.00px;font-size:8.0px;line-height:8.0px;font-weight:400;color:#222;transform:scaleX(0.8542);transform-origin:0 50%;">Subsystem_1</div>
<div class="r" style="left:295.40px;top:27.00px;font-size:8.0px;line-height:8.0px;font-weight:400;color:#222;transform:scaleX(0.8924);transform-origin:0 50%;">ADAQ7768-1 Board</div>
<div class="r" style="left:384.90px;top:27.00px;font-size:8.0px;line-height:8.0px;font-weight:400;color:#222;transform:scaleX(0.8783);transform-origin:0 50%;">ADAQ7768-1</div>
<div class="r" style="left:453.20px;top:27.00px;font-size:8.0px;line-height:8.0px;font-weight:400;color:#222;transform:scaleX(0.8881);transform-origin:0 50%;">ADAQ7768-1 Analysis</div>
<div class="r" style="left:147.50px;top:58.20px;font-size:8.0px;line-height:8.0px;font-weight:400;color:#222;transform:scaleX(0.9199);transform-origin:0 50%;">Plug-in Manager</div>
<div class="r" style="left:230.80px;top:58.20px;font-size:8.0px;line-height:8.0px;font-weight:400;color:#222;transform:scaleX(0.8636);transform-origin:0 50%;">Start</div>
<div class="r" style="left:274.70px;top:58.20px;font-size:8.0px;line-height:8.0px;font-weight:400;color:#222;transform:scaleX(0.8548);transform-origin:0 50%;">System</div>
<div class="r" style="left:340.60px;top:58.20px;font-size:8.0px;line-height:8.0px;font-weight:400;color:#222;transform:scaleX(0.8966);transform-origin:0 50%;">ADAQ7768-1 Board</div>
<div class="r" style="left:434.00px;top:58.20px;font-size:8.0px;line-height:8.0px;font-weight:400;color:#222;transform:scaleX(0.8972);transform-origin:0 50%;">ADAQ7768-1</div>
<div class="r" style="left:506.00px;top:58.20px;font-size:8.0px;line-height:8.0px;font-weight:400;color:#222;transform:scaleX(0.8881);transform-origin:0 50%;">ADAQ7768-1 Analysis</div>
<div class="r" style="left:147.20px;top:107.22px;font-size:8.4px;line-height:8.4px;font-weight:400;color:#111;transform:scaleX(0.8981);transform-origin:0 50%;-webkit-text-stroke:0.4px #111;">Waveform</div>
<div class="r" style="left:146.20px;top:149.02px;font-size:8.4px;line-height:8.4px;font-weight:400;color:#111;transform:scaleX(0.9431);transform-origin:0 50%;-webkit-text-stroke:0.4px #111;">Histogram</div>
<div class="r" style="left:158.50px;top:191.02px;font-size:8.4px;line-height:8.4px;font-weight:400;color:#111;transform:scaleX(0.7487);transform-origin:0 50%;-webkit-text-stroke:0.4px #111;">FFT</div>
<div class="r" style="left:216.50px;top:85.50px;font-size:16px;line-height:16px;font-weight:400;color:#ffffff;transform:scaleX(0.8328);transform-origin:0 50%;">CAPTURE SETTINGS</div>
<div class="r" style="left:305.70px;top:112.20px;font-size:8.0px;line-height:8.0px;font-weight:400;color:#222;transform:scaleX(0.8857);transform-origin:0 50%;">Restore Software Defaults</div>
<div class="r" style="left:200.70px;top:134.28px;font-size:9.6px;line-height:9.6px;font-weight:400;color:#ffffff;transform:scaleX(0.9606);transform-origin:0 50%;">General Capture Settings</div>
<div class="r" style="left:215.40px;top:157.40px;font-size:8.0px;line-height:8.0px;font-weight:400;color:#222;transform:scaleX(0.9000);transform-origin:0 50%;">ODR:</div>
<div class="r" style="left:270.70px;top:157.20px;font-size:8.0px;line-height:8.0px;font-weight:400;color:#8a8a8a;transform:scaleX(0.9085);transform-origin:0 50%;">256 ksps</div>
<div class="r" style="left:215.40px;top:174.90px;font-size:8.0px;line-height:8.0px;font-weight:400;color:#222;transform:scaleX(0.9372);transform-origin:0 50%;">Sample Count:</div>
<div class="r" style="left:270.70px;top:174.80px;font-size:8.0px;line-height:8.0px;font-weight:400;color:#222;transform:scaleX(0.9124);transform-origin:0 50%;">32768</div>
<div class="r" style="left:279.00px;top:644.00px;font-size:8.0px;line-height:8.0px;font-weight:400;color:#222;transform:scaleX(0.8881);transform-origin:0 50%;">Run Once</div>
<div class="r" style="left:331.40px;top:644.00px;font-size:8.0px;line-height:8.0px;font-weight:400;color:#222;transform:scaleX(0.9073);transform-origin:0 50%;">Run Continuously</div>
<div class="r" style="left:455.90px;top:85.50px;font-size:16px;line-height:16px;font-weight:400;color:#ffffff;transform:scaleX(0.7781);transform-origin:0 50%;">RESULTS</div>
<div class="r" style="left:495.00px;top:112.20px;font-size:8.0px;line-height:8.0px;font-weight:400;color:#222;transform:scaleX(0.8610);transform-origin:0 50%;">Previous</div>
<div class="r" style="left:558.70px;top:112.20px;font-size:8.0px;line-height:8.0px;font-weight:400;color:#b8b8b8;transform:scaleX(0.9056);transform-origin:0 50%;">Next</div>
<div class="r" style="left:401.60px;top:134.08px;font-size:9.6px;line-height:9.6px;font-weight:400;color:#ffffff;transform:scaleX(0.9376);transform-origin:0 50%;">Current Data Set:</div>
<div class="r" style="left:478.20px;top:134.08px;font-size:9.6px;line-height:9.6px;font-weight:400;color:#e8f6fa;transform:scaleX(0.9166);transform-origin:0 50%;">DataSet_11</div>
<div class="r" style="left:401.60px;top:158.48px;font-size:9.6px;line-height:9.6px;font-weight:400;color:#ffffff;transform:scaleX(0.9442);transform-origin:0 50%;">General Capture Results</div>
<div class="r" style="left:416.00px;top:179.70px;font-size:8.0px;line-height:8.0px;font-weight:400;color:#111;transform:scaleX(0.9673);transform-origin:0 50%;">Date:</div>
<div class="r" style="left:435.80px;top:179.70px;font-size:8.0px;line-height:8.0px;font-weight:400;color:#1d93b3;transform:scaleX(0.9412);transform-origin:0 50%;">3/23/2022</div>
<div class="r" style="left:416.00px;top:190.80px;font-size:8.0px;line-height:8.0px;font-weight:400;color:#111;transform:scaleX(0.9389);transform-origin:0 50%;">Time:</div>
<div class="r" style="left:435.80px;top:190.80px;font-size:8.0px;line-height:8.0px;font-weight:400;color:#1d93b3;transform:scaleX(0.9017);transform-origin:0 50%;">4:16:35 PM</div>
<div class="r" style="left:401.60px;top:208.68px;font-size:9.6px;line-height:9.6px;font-weight:400;color:#ffffff;transform:scaleX(0.9281);transform-origin:0 50%;">Results</div>
<div class="r" style="left:416.00px;top:229.50px;font-size:8.0px;line-height:8.0px;font-weight:400;color:#222;transform:scaleX(0.9300);transform-origin:0 50%;">Sample Frequency:</div>
<div class="r" style="left:500.30px;top:229.50px;font-size:8.0px;line-height:8.0px;font-weight:400;color:#1d93b3;transform:scaleX(0.8750);transform-origin:0 50%;">256 kHz</div>
<div class="r" style="left:416.00px;top:240.85px;font-size:8.0px;line-height:8.0px;font-weight:400;color:#222;transform:scaleX(0.9300);transform-origin:0 50%;">Samples:</div>
<div class="r" style="left:500.30px;top:240.85px;font-size:8.0px;line-height:8.0px;font-weight:400;color:#1d93b3;transform:scaleX(0.8750);transform-origin:0 50%;">32768</div>
<div class="r" style="left:416.00px;top:252.20px;font-size:8.0px;line-height:8.0px;font-weight:400;color:#222;transform:scaleX(0.9300);transform-origin:0 50%;">Noise / Hz:</div>
<div class="r" style="left:500.30px;top:252.20px;font-size:8.0px;line-height:8.0px;font-weight:400;color:#1d93b3;transform:scaleX(0.8750);transform-origin:0 50%;">-154.946 dBFSPerHz</div>
<div class="r" style="left:416.00px;top:263.55px;font-size:8.0px;line-height:8.0px;font-weight:400;color:#222;transform:scaleX(0.9300);transform-origin:0 50%;">Avg Bin Noise:</div>
<div class="r" style="left:500.30px;top:263.55px;font-size:8.0px;line-height:8.0px;font-weight:400;color:#1d93b3;transform:scaleX(0.8750);transform-origin:0 50%;">-146.019 dB</div>
<div class="r" style="left:416.00px;top:274.90px;font-size:8.0px;line-height:8.0px;font-weight:400;color:#222;transform:scaleX(0.9300);transform-origin:0 50%;">SNR:</div>
<div class="r" style="left:500.30px;top:274.90px;font-size:8.0px;line-height:8.0px;font-weight:400;color:#1d93b3;transform:scaleX(0.8750);transform-origin:0 50%;">103.38 dB</div>
<div class="r" style="left:416.00px;top:286.25px;font-size:8.0px;line-height:8.0px;font-weight:400;color:#222;transform:scaleX(0.9300);transform-origin:0 50%;">SNR FS:</div>
<div class="r" style="left:500.30px;top:286.25px;font-size:8.0px;line-height:8.0px;font-weight:400;color:#1d93b3;transform:scaleX(0.8750);transform-origin:0 50%;">103.874 dB</div>
<div class="r" style="left:416.00px;top:297.60px;font-size:8.0px;line-height:8.0px;font-weight:400;color:#222;transform:scaleX(0.9300);transform-origin:0 50%;">SFDR:</div>
<div class="r" style="left:500.30px;top:297.60px;font-size:8.0px;line-height:8.0px;font-weight:400;color:#1d93b3;transform:scaleX(0.8750);transform-origin:0 50%;">121.097 dB</div>
<div class="r" style="left:416.00px;top:308.95px;font-size:8.0px;line-height:8.0px;font-weight:400;color:#222;transform:scaleX(0.9300);transform-origin:0 50%;">THD:</div>
<div class="r" style="left:500.30px;top:308.95px;font-size:8.0px;line-height:8.0px;font-weight:400;color:#1d93b3;transform:scaleX(0.8750);transform-origin:0 50%;">-119.661 dBFS</div>
<div class="r" style="left:416.00px;top:320.30px;font-size:8.0px;line-height:8.0px;font-weight:400;color:#222;transform:scaleX(0.9300);transform-origin:0 50%;">SINAD:</div>
<div class="r" style="left:500.30px;top:320.30px;font-size:8.0px;line-height:8.0px;font-weight:400;color:#1d93b3;transform:scaleX(0.8750);transform-origin:0 50%;">103.27 dB</div>
<div class="r" style="left:416.00px;top:331.65px;font-size:8.0px;line-height:8.0px;font-weight:400;color:#222;transform:scaleX(0.9300);transform-origin:0 50%;">Dynamic Range:</div>
<div class="r" style="left:500.30px;top:331.65px;font-size:8.0px;line-height:8.0px;font-weight:400;color:#1d93b3;transform:scaleX(0.8750);transform-origin:0 50%;">103.874 dBFS</div>
<div class="r" style="left:416.00px;top:343.00px;font-size:8.0px;line-height:8.0px;font-weight:400;color:#222;transform:scaleX(0.9300);transform-origin:0 50%;">DC Frequency:</div>
<div class="r" style="left:500.30px;top:343.00px;font-size:8.0px;line-height:8.0px;font-weight:400;color:#1d93b3;transform:scaleX(0.8750);transform-origin:0 50%;">0 Hz</div>
<div class="r" style="left:416.00px;top:354.35px;font-size:8.0px;line-height:8.0px;font-weight:400;color:#222;transform:scaleX(0.9300);transform-origin:0 50%;">DC Power:</div>
<div class="r" style="left:500.30px;top:354.35px;font-size:8.0px;line-height:8.0px;font-weight:400;color:#1d93b3;transform:scaleX(0.8750);transform-origin:0 50%;">-87.262 dBFS</div>
<div class="r" style="left:416.00px;top:365.70px;font-size:8.0px;line-height:8.0px;font-weight:400;color:#222;transform:scaleX(0.9300);transform-origin:0 50%;">Fund Frequency:</div>
<div class="r" style="left:500.30px;top:365.70px;font-size:8.0px;line-height:8.0px;font-weight:400;color:#1d93b3;transform:scaleX(0.8750);transform-origin:0 50%;">1 kHz</div>
<div class="r" style="left:416.00px;top:377.05px;font-size:8.0px;line-height:8.0px;font-weight:400;color:#222;transform:scaleX(0.9300);transform-origin:0 50%;">Fund Power:</div>
<div class="r" style="left:500.30px;top:377.05px;font-size:8.0px;line-height:8.0px;font-weight:400;color:#1d93b3;transform:scaleX(0.8750);transform-origin:0 50%;">-0.495 dBFS</div>
<div class="r" style="left:416.00px;top:388.40px;font-size:8.0px;line-height:8.0px;font-weight:400;color:#222;transform:scaleX(0.9300);transform-origin:0 50%;">Harm 2 Frequency:</div>
<div class="r" style="left:500.30px;top:388.40px;font-size:8.0px;line-height:8.0px;font-weight:400;color:#1d93b3;transform:scaleX(0.8750);transform-origin:0 50%;">2 kHz</div>
<div class="r" style="left:416.00px;top:399.75px;font-size:8.0px;line-height:8.0px;font-weight:400;color:#222;transform:scaleX(0.9300);transform-origin:0 50%;">Harm 2 Power:</div>
<div class="r" style="left:500.30px;top:399.75px;font-size:8.0px;line-height:8.0px;font-weight:400;color:#1d93b3;transform:scaleX(0.8750);transform-origin:0 50%;">-121.592 dBFS</div>
<div class="r" style="left:416.00px;top:411.10px;font-size:8.0px;line-height:8.0px;font-weight:400;color:#222;transform:scaleX(0.9300);transform-origin:0 50%;">Harm 3 Frequency:</div>
<div class="r" style="left:500.30px;top:411.10px;font-size:8.0px;line-height:8.0px;font-weight:400;color:#1d93b3;transform:scaleX(0.8750);transform-origin:0 50%;">3 kHz</div>
<div class="r" style="left:416.00px;top:422.45px;font-size:8.0px;line-height:8.0px;font-weight:400;color:#222;transform:scaleX(0.9300);transform-origin:0 50%;">Harm 3 Power:</div>
<div class="r" style="left:500.30px;top:422.45px;font-size:8.0px;line-height:8.0px;font-weight:400;color:#1d93b3;transform:scaleX(0.8750);transform-origin:0 50%;">-126.859 dBFS</div>
<div class="r" style="left:416.00px;top:433.80px;font-size:8.0px;line-height:8.0px;font-weight:400;color:#222;transform:scaleX(0.9300);transform-origin:0 50%;">Harm 4 Frequency:</div>
<div class="r" style="left:500.30px;top:433.80px;font-size:8.0px;line-height:8.0px;font-weight:400;color:#1d93b3;transform:scaleX(0.8750);transform-origin:0 50%;">4 kHz</div>
<div class="r" style="left:416.00px;top:445.15px;font-size:8.0px;line-height:8.0px;font-weight:400;color:#222;transform:scaleX(0.9300);transform-origin:0 50%;">Harm 4 Power:</div>
<div class="r" style="left:500.30px;top:445.15px;font-size:8.0px;line-height:8.0px;font-weight:400;color:#1d93b3;transform:scaleX(0.8750);transform-origin:0 50%;">-134.342 dBFS</div>
<div class="r" style="left:416.00px;top:456.50px;font-size:8.0px;line-height:8.0px;font-weight:400;color:#222;transform:scaleX(0.9300);transform-origin:0 50%;">Harm 5 Frequency:</div>
<div class="r" style="left:500.30px;top:456.50px;font-size:8.0px;line-height:8.0px;font-weight:400;color:#1d93b3;transform:scaleX(0.8750);transform-origin:0 50%;">5 kHz</div>
<div class="r" style="left:416.00px;top:467.85px;font-size:8.0px;line-height:8.0px;font-weight:400;color:#222;transform:scaleX(0.9300);transform-origin:0 50%;">Harm 5 Power:</div>
<div class="r" style="left:500.30px;top:467.85px;font-size:8.0px;line-height:8.0px;font-weight:400;color:#1d93b3;transform:scaleX(0.8750);transform-origin:0 50%;">-128.38 dBFS</div>
<div class="r" style="left:416.00px;top:479.20px;font-size:8.0px;line-height:8.0px;font-weight:400;color:#222;transform:scaleX(0.9300);transform-origin:0 50%;">Worst Other Frequency:</div>
<div class="r" style="left:500.30px;top:479.20px;font-size:8.0px;line-height:8.0px;font-weight:400;color:#1d93b3;transform:scaleX(0.8750);transform-origin:0 50%;">375 Hz</div>
<div class="r" style="left:416.00px;top:490.55px;font-size:8.0px;line-height:8.0px;font-weight:400;color:#222;transform:scaleX(0.9300);transform-origin:0 50%;">Worst Other Power:</div>
<div class="r" style="left:500.30px;top:490.55px;font-size:8.0px;line-height:8.0px;font-weight:400;color:#1d93b3;transform:scaleX(0.8750);transform-origin:0 50%;">-123.653 dBFS</div>
<div class="r" style="left:435.60px;top:644.00px;font-size:8.0px;line-height:8.0px;font-weight:400;color:#222;transform:scaleX(0.9196);transform-origin:0 50%;">Clear All</div>
<div class="r" style="left:497.50px;top:644.00px;font-size:8.0px;line-height:8.0px;font-weight:400;color:#222;transform:scaleX(0.9571);transform-origin:0 50%;">Import</div>
<div class="r" style="left:556.00px;top:644.00px;font-size:8.0px;line-height:8.0px;font-weight:400;color:#222;transform:scaleX(0.9081);transform-origin:0 50%;">Export</div>
<div class="r" style="left:141.00px;top:678.00px;font-size:8.0px;line-height:8.0px;font-weight:400;color:#222;transform:scaleX(0.8855);transform-origin:0 50%;">State=Good, ADAQ7768-1 Analysis - CheckState, Finished at 16:17:41</div>
<div style="left:673.70px;top:146.25px;font-size:9px;line-height:9px;font-weight:700;color:#111;transform:scaleX(0.8990);transform-origin:0 50%;">IN0</div>
<div class="r" style="left:614.00px;top:165.02px;font-size:8.4px;line-height:8.4px;font-weight:400;color:#333;">0</div>
<div class="r" style="left:614.00px;top:260.82px;font-size:8.4px;line-height:8.4px;font-weight:400;color:#333;transform:scaleX(0.9200);transform-origin:0 50%;">-50</div>
<div class="r" style="left:614.00px;top:356.62px;font-size:8.4px;line-height:8.4px;font-weight:400;color:#333;transform:scaleX(0.9200);transform-origin:0 50%;">-100</div>
<div class="r" style="left:614.00px;top:452.42px;font-size:8.4px;line-height:8.4px;font-weight:400;color:#333;transform:scaleX(0.9200);transform-origin:0 50%;">-150</div>
<div class="r" style="left:614.00px;top:548.22px;font-size:8.4px;line-height:8.4px;font-weight:400;color:#333;transform:scaleX(0.9200);transform-origin:0 50%;">-200</div>
<div class="r" style="left:484.00px;width:300px;text-align:center;top:616.12px;font-size:8.4px;line-height:8.4px;font-weight:400;color:#333;">0</div>
<div class="r" style="left:578.68px;width:300px;text-align:center;top:616.12px;font-size:8.4px;line-height:8.4px;font-weight:400;color:#333;transform:scaleX(0.9200);transform-origin:50% 50%;">20</div>
<div class="r" style="left:676.26px;width:300px;text-align:center;top:616.12px;font-size:8.4px;line-height:8.4px;font-weight:400;color:#333;transform:scaleX(0.9200);transform-origin:50% 50%;">40</div>
<div class="r" style="left:773.84px;width:300px;text-align:center;top:616.12px;font-size:8.4px;line-height:8.4px;font-weight:400;color:#333;transform:scaleX(0.9200);transform-origin:50% 50%;">60</div>
<div class="r" style="left:871.42px;width:300px;text-align:center;top:616.12px;font-size:8.4px;line-height:8.4px;font-weight:400;color:#333;transform:scaleX(0.9200);transform-origin:50% 50%;">80</div>
<div class="r" style="left:969.00px;width:300px;text-align:center;top:616.12px;font-size:8.4px;line-height:8.4px;font-weight:400;color:#333;transform:scaleX(0.9200);transform-origin:50% 50%;">100</div>
<div class="r" style="left:1066.58px;width:300px;text-align:center;top:616.12px;font-size:8.4px;line-height:8.4px;font-weight:400;color:#333;transform:scaleX(0.9200);transform-origin:50% 50%;">120</div>
<div style="left:793.90px;width:300px;text-align:center;top:630.37px;font-size:9.4px;line-height:9.4px;font-weight:700;color:#111;transform:scaleX(0.9721);transform-origin:50% 50%;">Frequency (kHz)</div>
<div style="left:777.20px;width:300px;text-align:center;top:124.40px;font-size:10.0px;line-height:10.0px;font-weight:700;color:#111;transform:scaleX(0.8457);transform-origin:50% 50%;-webkit-text-stroke:0.25px #111;">FFT</div>
<div class="r" style="left:672.00px;top:107.22px;font-size:8.4px;line-height:8.4px;font-weight:400;color:#3596b3;transform:scaleX(0.9046);transform-origin:0 50%;">XYDirection</div>
<div class="r" style="left:820.80px;top:106.66px;font-size:9.2px;line-height:9.2px;font-weight:400;color:#3a8fb0;transform:scaleX(0.8034);transform-origin:0 50%;">X,Y</div>
<div style="left:837.90px;top:108.93px;font-size:6.6px;line-height:6.6px;font-weight:700;color:#3a8fb0;transform:scaleX(0.8627);transform-origin:0 50%;">LEG</div>
</body></html>
